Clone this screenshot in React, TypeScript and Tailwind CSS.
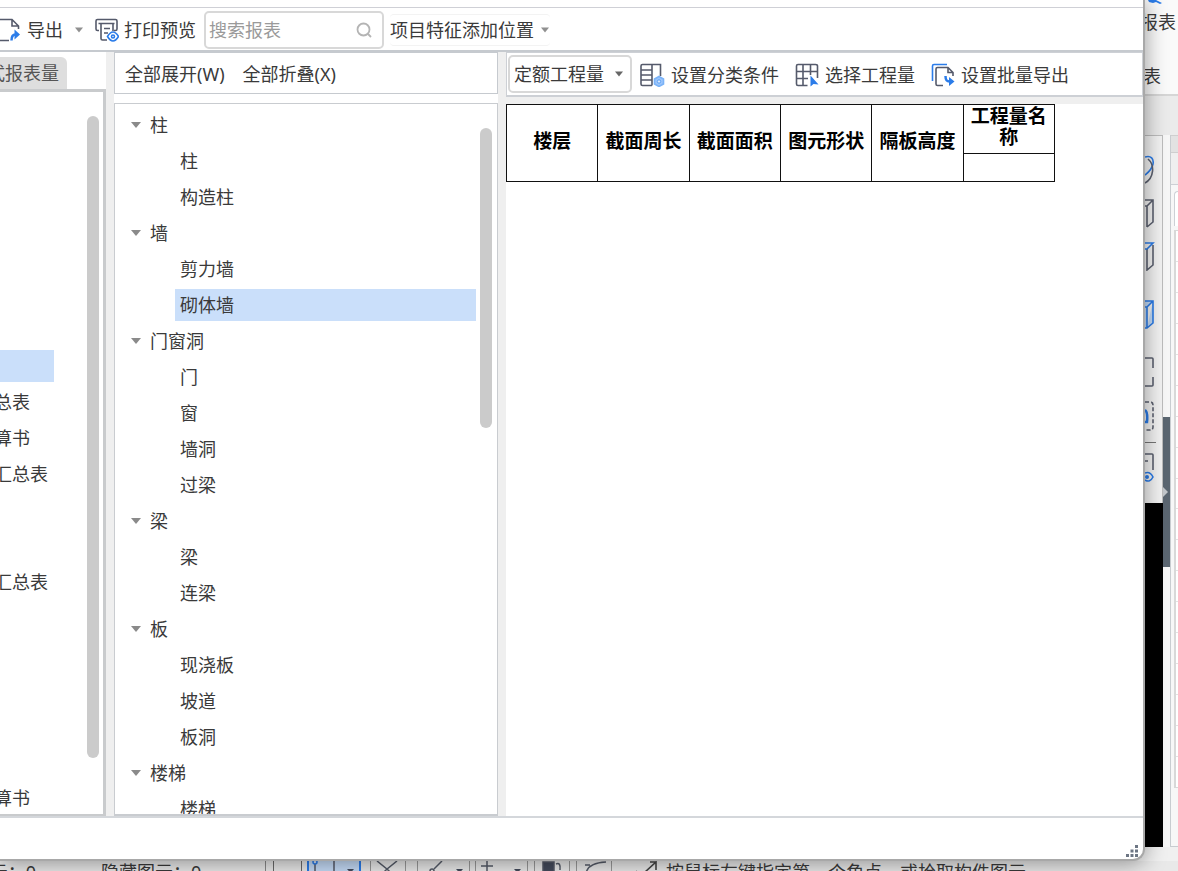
import type { ReactNode } from 'react'

type TreeNode = { label: string; children: string[] }

const componentTree: TreeNode[] = [
  { label: '柱', children: ['柱', '构造柱'] },
  { label: '墙', children: ['剪力墙', '砌体墙'] },
  { label: '门窗洞', children: ['门', '窗', '墙洞', '过梁'] },
  { label: '梁', children: ['梁', '连梁'] },
  { label: '板', children: ['现浇板', '坡道', '板洞'] },
  { label: '楼梯', children: ['楼梯'] },
]

// report names are scrolled sideways, only their tails are visible
const reportRows = ['', '', '', '', '', '', '', '', '总表', '算书', '汇总表', '', '', '汇总表', '', '', '', '', '', '算书']
const activeReport = 7

const columns = ['楼层', '截面周长', '截面面积', '图元形状', '隔板高度']

export default function App() {
  return (
    <div className="flex h-screen flex-col overflow-hidden bg-[#f0f0f0] font-['Noto_Sans','Noto_Sans_CJK_SC',sans-serif] text-[18px] leading-6 text-[#3a3a3a]">
      <div className="flex min-h-0 flex-1">
        <main className="relative z-10 flex min-w-0 flex-1 flex-col overflow-hidden rounded-br-xl border-r-2 border-b-2 border-[#a8a8a8] bg-white shadow-[0_2px_22px_rgba(0,0,0,0.4)]">
          <div className="h-2 shrink-0 border-b border-[#cfd0d6]" />
          <Toolbar />
          <div className="flex min-h-0 flex-1">
            <ReportPanel />
            <div className="w-2 shrink-0 bg-[#efefef]" />
            <ComponentPanel />
            <div className="w-2 shrink-0 bg-[#efefef]" />
            <ResultPanel />
          </div>
          <footer className="flex h-[43px] shrink-0 items-end justify-end border-t-2 border-[#d4d7db] px-1 pb-px">
            <ResizeGrip />
          </footer>
        </main>
        <Backdrop />
      </div>
      <StatusBar />
    </div>
  )
}

function Toolbar() {
  return (
    <header className="flex h-11 shrink-0 items-center border-b-2 border-[#c6cacf] pt-px">
      <button className="flex items-center gap-[7px]">
        <ExportIcon />
        导出
      </button>
      <button aria-label="导出选项" className="ml-[11px]">
        <Caret className="text-[#909090]" />
      </button>
      <button className="ml-[11px] flex items-center gap-[5px]">
        <PrintPreviewIcon />
        打印预览
      </button>
      <label className="ml-2 flex h-[38px] w-[180px] items-center rounded-[5px] border-2 border-[#d8d8d8] pr-2 pl-[3px]">
        <input aria-label="搜索报表" placeholder="搜索报表" className="min-w-0 flex-1 outline-none placeholder:text-[#9a9a9a]" />
        <svg viewBox="0 0 20 20" className="h-5 w-5" fill="none" stroke="#b4b4b4" strokeWidth="1.8">
          <circle cx="9.5" cy="9.5" r="6" />
          <path d="M14 14l3 3" />
        </svg>
      </label>
      <button className="ml-[6px] flex h-8 items-center gap-[6px] rounded border-y border-[#f3f3f3]">
        项目特征添加位置
        <Caret className="text-[#909090]" />
      </button>
    </header>
  )
}

function ReportPanel() {
  return (
    <section className="flex w-[106px] shrink-0 flex-col">
      <div className="flex h-[37px] shrink-0 items-end overflow-hidden">
        <button className="flex h-8 w-[67px] items-center justify-end rounded-tr-md bg-[#dedede] pr-2 whitespace-nowrap text-[#555555]">
          式报表量
        </button>
      </div>
      <div className="flex min-h-0 flex-1 overflow-hidden border-t-[3px] border-r-[3px] border-b-2 border-[#c9cbcd]">
        <ul className="min-w-0 flex-1 pt-1">
          {reportRows.map((label, i) => (
            <li key={i} className="flex h-9 items-center">
              <span
                className={`flex h-8 items-center justify-end whitespace-nowrap ${i === activeReport ? 'w-[54px] bg-[#cadffa]' : label.length > 2 ? 'w-12' : 'w-[30px]'}`}
              >
                {label}
              </span>
            </li>
          ))}
        </ul>
        <div className="mt-6 mr-1 mb-14 w-3 shrink-0 rounded-full bg-[#cbcbcb]" />
      </div>
    </section>
  )
}

function ComponentPanel() {
  return (
    <section className="flex w-[384px] shrink-0 flex-col gap-[9px]">
      <div className="flex h-[42px] shrink-0 items-center gap-[18px] border border-[#c6cacf] px-[10px] pt-[2px]">
        <button>全部展开(W)</button>
        <button>全部折叠(X)</button>
      </div>
      <div className="flex min-h-0 flex-1 overflow-hidden border border-b-2 border-[#c9ccd0]">
        <ul className="flex-1 pt-[3px]">
          {componentTree.map((node) => (
            <li key={node.label}>
              <div className="flex h-9 items-center gap-2 pl-[15px]">
                <svg viewBox="0 0 12 8" className="h-2 w-3" fill="#8a8a8a">
                  <path d="M1 1h10L6 7z" />
                </svg>
                {node.label}
              </div>
              <ul>
                {node.children.map((child) => (
                  <li key={child} className="flex h-9 items-center pl-[60px]">
                    <span className={`flex h-8 flex-1 items-center pl-[5px] ${child === '砌体墙' ? 'bg-[#cadffa]' : ''}`}>{child}</span>
                  </li>
                ))}
              </ul>
            </li>
          ))}
        </ul>
        <div className="mt-6 mr-[5px] ml-1 h-[300px] w-3 shrink-0 rounded-full bg-[#cbcbcb]" />
      </div>
    </section>
  )
}

function ResultPanel() {
  return (
    <section className="min-w-0 flex-1">
      <div className="flex h-[45px] items-center border border-b-2 border-[#cdd0d5] pl-px">
        <div className="relative">
          <select aria-label="工程量类型" className="h-[38px] w-[124px] appearance-none rounded-[5px] border-2 border-[#d8d8d8] bg-white pl-1 outline-none">
            <option>定额工程量</option>
          </select>
          <Caret className="pointer-events-none absolute top-4 right-2 text-[#666666]" />
        </div>
        <div className="ml-2 flex gap-4 pt-[2px]">
          <ToolButton icon={<ConditionIcon />}>设置分类条件</ToolButton>
          <ToolButton icon={<PickIcon />}>选择工程量</ToolButton>
          <ToolButton icon={<BatchExportIcon />}>设置批量导出</ToolButton>
        </div>
      </div>
      <div className="h-[7px] bg-[#efefef]" />
      <table className="w-[549px] table-fixed border-collapse text-[19px] leading-[21px] text-black">
        <thead>
          <tr className="h-[49px]">
            {columns.map((name) => (
              <th key={name} rowSpan={2} className="border border-[#111111] p-0 pb-1">
                {name}
              </th>
            ))}
            <th className="border border-[#111111] p-0 pb-1">工程量名称</th>
          </tr>
          <tr className="h-7">
            <th className="border border-[#111111] p-0" />
          </tr>
        </thead>
      </table>
    </section>
  )
}

function ToolButton({ icon, children }: { icon: ReactNode; children: ReactNode }) {
  return (
    <button className="flex items-center gap-[6px] whitespace-nowrap">
      {icon}
      {children}
    </button>
  )
}

// main program window peeking out on the right
function Backdrop() {
  return (
    <aside className="flex w-[33px] shrink-0 flex-col">
      <div className="flex h-24 shrink-0 flex-col overflow-hidden border-b-2 border-[#d6d6d6] bg-[#fafafa]">
        <svg viewBox="0 0 20 6" className="h-[6px] w-5" fill="#2b7ce9">
          <path d="M3 0h8l6 3-2 1-4-2-3 1-4-1z" />
        </svg>
        <span className="flex h-8 w-[31px] items-center justify-end whitespace-nowrap">报表</span>
        <span className="mt-[26px] flex w-4 justify-end">表</span>
      </div>
      <div className="h-[39px] shrink-0 bg-[#ebebeb]" />
      <div className="flex min-h-0 flex-1">
        <div className="flex w-[18px] shrink-0 flex-col">
          <div className="flex h-[368px] shrink-0 flex-col border-t border-r border-[#bdbdbd] bg-[#f3f3f3] pt-[19px]">
            <ViewIcon>
              <path d="M0 2C6 0 9 4 8 9S4 17 0 20" stroke="#2b7ce9" />
              <path d="M3 4c7 6 6 19-3 24" />
            </ViewIcon>
            <ViewIcon className="mt-[13px]">
              <path d="M0 2h8v22l-6 5M8 2L2 8v21M0 8h2" />
            </ViewIcon>
            <ViewIcon className="mt-[13px]">
              <path d="M8 4v20l-6 5V8" />
              <path d="M0 2h8L2 8H0" stroke="#2b7ce9" />
            </ViewIcon>
            <ViewIcon className="mt-7">
              <path d="M0 2h8v22l-6 5H0M8 2L2 8v21M0 8h2" stroke="#2b7ce9" fill="#c3dbf8" />
            </ViewIcon>
            <ViewIcon className="mt-7">
              <path d="M0 1h7q1 0 1 1v9M8 20v8q0 1-1 1H0" />
            </ViewIcon>
            <ViewIcon className="mt-[14px]">
              <path d="M0 1h5q3 0 3 3v22q0 3-3 3H0" strokeDasharray="4 2" />
              <path d="M0 9q3 2 2 12H0" stroke="#2b7ce9" strokeWidth="2.5" />
            </ViewIcon>
            <div className="mt-[11px] h-px w-[11px] bg-[#777777]" />
            <ViewIcon className="mt-[9px]">
              <path d="M0 2h7q1 0 1 1v15M0 9h3" />
              <path d="M0 21q5-2 8 4-3 6-8 3" stroke="#2b7ce9" />
              <circle cx="2" cy="25" r="2" fill="#2b7ce9" stroke="none" />
            </ViewIcon>
          </div>
          <div className="flex-1 bg-black" />
        </div>
        <div className="flex w-[7px] shrink-0 flex-col bg-[#f7f7f7] pt-[282px]">
          <div className="flex h-[150px] items-center bg-[#5b6671]">
            <svg viewBox="0 0 6 12" className="h-3 w-[6px]" fill="#c4c8cc">
              <path d="M0 1l5 5-5 5z" />
            </svg>
          </div>
        </div>
        <div className="flex min-w-0 flex-1 flex-col border-b border-l border-[#c8ccd0] bg-[#f7f7f7]">
          <div className="h-[18px] shrink-0 border-y border-[#cfcfcf] bg-[#e2e2e2]" />
          <div className="h-8 shrink-0 border-b border-[#cdd0d5] bg-[#efefef]" />
          <div className="mt-[6px] ml-[3px] h-[35px] shrink-0 rounded-tl-lg border-l border-t border-[#cdd0d5] bg-white" />
          <div className="mt-1 mb-[58px] ml-[3px] flex flex-1 flex-col divide-y divide-[#e2e2e2] border-y border-l-2 border-[#d8d8d8] bg-white">
            {Array.from({ length: 18 }, (_, i) => (
              <div key={i} className="flex-1" />
            ))}
          </div>
        </div>
      </div>
      <div className="h-[14px] shrink-0" />
    </aside>
  )
}

function ViewIcon({ className = '', children }: { className?: string; children: ReactNode }) {
  return (
    <svg viewBox="0 0 12 30" className={`h-[30px] w-3 shrink-0 ${className}`} fill="none" stroke="#5c6170" strokeWidth="1.6">
      {children}
    </svg>
  )
}

function StatusBar() {
  return (
    <div className="h-[10px] shrink-0 overflow-hidden bg-[#e9e9e9]">
      <div className="flex h-[22px] items-center whitespace-nowrap">
        <span className="flex w-9 justify-end">元：0</span>
        <span className="ml-[65px] w-[164px]">隐藏图元：0</span>
        <div className="flex h-full items-stretch">
          <div className="w-2 border-l border-[#8a8a8a]" />
          <div className="w-[29px] border-x border-[#6a6a6a]" />
          <div className="ml-[5px] w-[54px] border-x-2 border-[#2b7ce9] bg-[#c5dbf7]">
            <ModeIcon>
              <path d="M6 3v19M25 0v22" />
              <circle cx="6" cy="1" r="2" stroke="#2b7ce9" />
              <path d="M38 8h7l-3.500 4z" fill="#444b5c" stroke="none" />
            </ModeIcon>
          </div>
          <div className="ml-[9px] w-9 border-x border-[#999999]">
            <ModeIcon>
              <path d="M6 0l10 8L26 0M16 8l-8 8M16 8l8 8" />
            </ModeIcon>
          </div>
          <div className="ml-[11px] w-[53px] border-x border-[#999999]">
            <ModeIcon>
              <path d="M24 0l-8 8" />
              <circle cx="14" cy="10" r="2" />
              <path d="M38 8h7l-3.500 4z" fill="#444b5c" stroke="none" />
            </ModeIcon>
          </div>
          <div className="ml-[5px] w-[53px] border-x border-[#999999]">
            <ModeIcon>
              <path d="M5 5h12M11 0v10" />
              <path d="M38 8h7l-3.500 4z" fill="#444b5c" stroke="none" />
            </ModeIcon>
          </div>
          <div className="ml-[6px] w-9 border-x border-[#999999]">
            <ModeIcon>
              <path d="M8 1h11v12H8z" fill="#444b5c" />
              <path d="M21 3q5-2 4 6" />
            </ModeIcon>
          </div>
          <div className="ml-[6px] w-9 border-x border-[#999999]">
            <ModeIcon>
              <path d="M9 13Q10 2 29 1M8 4h5" />
            </ModeIcon>
          </div>
        </div>
        <svg viewBox="0 0 30 22" className="ml-[18px] h-[22px] w-[30px]" fill="none" stroke="#444444" strokeWidth="1.6">
          <path d="M14 12L26 1v8M26 1h-6M6 10l3 3" />
        </svg>
        <span className="ml-[6px]">按鼠标左键指定第一个角点，或拾取构件图元</span>
      </div>
    </div>
  )
}

function ModeIcon({ children }: { children: ReactNode }) {
  return (
    <svg viewBox="0 0 50 22" className="h-[22px] w-[50px]" fill="none" stroke="#555b68" strokeWidth="1.5">
      {children}
    </svg>
  )
}

function ResizeGrip() {
  return (
    <svg viewBox="0 0 14 14" className="h-[14px] w-[14px]" fill="#6d7684">
      <path d="M10 1h3v3h-3zM10 5.500h3v3h-3zM5.500 5.500h3v3h-3zM10 10h3v3h-3zM5.500 10h3v3h-3zM1 10h3v3H1z" />
    </svg>
  )
}

function Caret({ className = '' }: { className?: string }) {
  return (
    <svg viewBox="0 0 10 6" className={`h-[6px] w-[10px] ${className}`} fill="currentColor">
      <path d="M1 .5h8L5 5.500z" />
    </svg>
  )
}

function ExportIcon() {
  return (
    <svg viewBox="0 0 20 24" className="h-6 w-5" fill="none" stroke="#555a6b" strokeWidth="1.6">
      <path d="M0 1.500h12l6.500 6.500v3M12 1.500V8h6.500M0 22.500h9" />
      <path d="M11.500 22.500c0-4 1-6 4-6" stroke="#2b7ce9" strokeWidth="2.500" />
      <path d="M14.500 11.500l5.500 5-5.500 5z" fill="#2b7ce9" stroke="none" />
    </svg>
  )
}

function PrintPreviewIcon() {
  return (
    <svg viewBox="0 0 24 24" className="h-6 w-6" fill="none" stroke="#555a6b" strokeWidth="1.6">
      <path d="M4 12.500H2.500q-1.500 0-1.500-1.500V3q0-1.500 1.500-1.500h18Q22 1.500 22 3v8q0 1.500-1.500 1.500H19" />
      <path d="M3.500 5.500h16M6 5.500v15q0 1.500 1.500 1.500H12M18 5.500V13M9 10.500h6M9 15h4" />
      <path d="M12.500 18.500q5.500-9 11 0-5.500 9-11 0z" fill="#fff" stroke="#2b7ce9" />
      <circle cx="18" cy="18.500" r="1.500" stroke="#2b7ce9" />
    </svg>
  )
}

function ConditionIcon() {
  return (
    <svg viewBox="0 0 25 24" className="h-6 w-[25px]" fill="none" stroke="#555a6b" strokeWidth="1.6">
      <path d="M12 22.500H2.500q-1.500 0-1.500-1.500V3q0-1.500 1.500-1.500h18V13M12 1.500v21M1 7h11M1 12h11M1 17h11" />
      <path d="M19 13.500l4.500 2.500v5L19 23.500 14.500 21v-5z" fill="#9cc5fb" stroke="#7ab3f8" />
      <circle cx="19" cy="18.500" r="1.700" fill="#dcebfe" stroke="#5aa0f5" strokeWidth="1" />
    </svg>
  )
}

function PickIcon() {
  return (
    <svg viewBox="0 0 24 24" className="h-6 w-6" fill="none" stroke="#555a6b" strokeWidth="1.6">
      <path d="M12.500 22.500H3q-1.500 0-1.500-1.500V3q0-1.500 1.500-1.500h17.500Q22.500 1.500 22.500 3v12M8 1.500v21M15.500 1.500V12M1.500 8.500h21M1.500 15.500H13" />
      <path d="M15.500 12.500v11l3-2.500 5 .5z" fill="#2b7ce9" stroke="none" />
    </svg>
  )
}

function BatchExportIcon() {
  return (
    <svg viewBox="0 0 24 24" className="h-6 w-6" fill="none" stroke="#555a6b" strokeWidth="1.6">
      <path d="M1.500 18V3q0-1.500 1.500-1.500h13" stroke="#2b7ce9" />
      <path d="M12 22.500H6.500Q5 22.500 5 21V6q0-1.500 1.500-1.500H17l5 5V13M17 4.500v5h5" />
      <path d="M14.500 13c0 4 1 5.500 4 5.500" stroke="#2b7ce9" strokeWidth="2.500" />
      <path d="M18 14l5.500 4.500L18 23z" fill="#2b7ce9" stroke="none" />
    </svg>
  )
}
